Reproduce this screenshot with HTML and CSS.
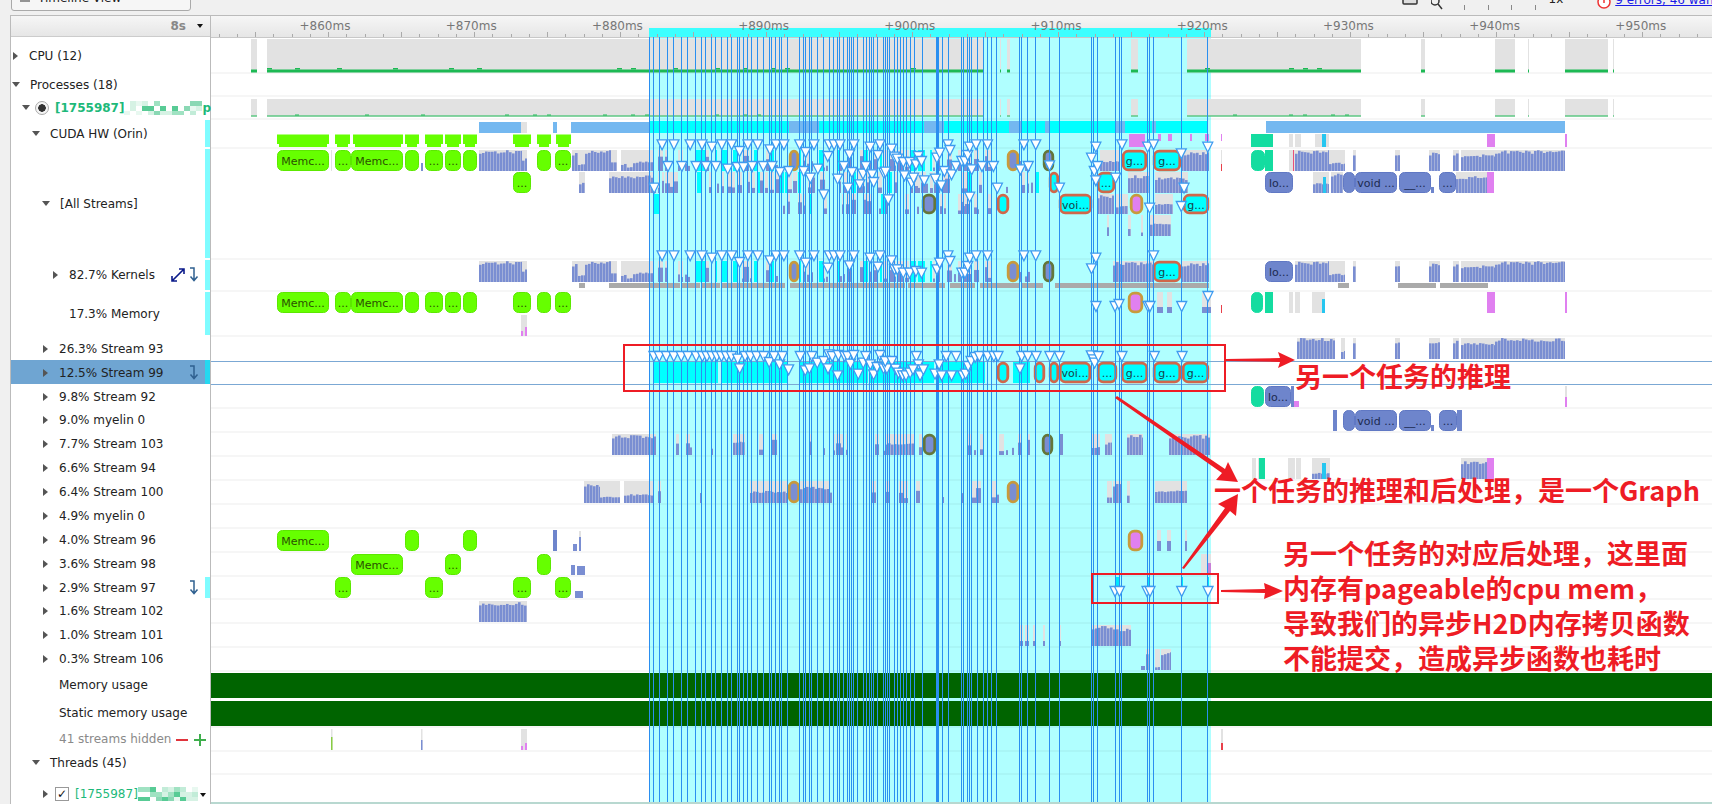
FILE: index.html
```html
<!DOCTYPE html>
<html lang="en">
    <head>
        <meta charset="UTF-8">
        <meta name="viewport" content="width=device-width, initial-scale=1.0">
        <link rel="stylesheet" href="styles.css">
        <title>Timeline View</title>
    </head>
    <body>
        <div class="toolbar">
            <div class="view-btn">
                <svg class="menu-icon" viewBox="0 0 10 10"><path d="M0 2H10M0 5H10M0 8H10"/></svg>
                <span>Timeline View</span>
                <i class="caret"></i>
            </div>
            <div class="tools">
                <svg class="tool-icon" viewBox="0 0 16 12"><rect x="1" y="-6" width="14" height="10" rx="1"/></svg>
                <svg class="tool-icon lens" viewBox="0 0 12 12"><circle cx="4" cy="1" r="4"/><path d="M7 4L11 9"/></svg>
                <div class="zoom-ticks"><i></i><i></i><i></i><i></i></div>
                <span class="speed">1x</span>
                <svg class="err-icon" viewBox="0 0 14 12"><circle cx="7" cy="2" r="6"/><path d="M7 0V3"/></svg>
                <a class="err-link" href="#">9 errors, 46 warnings</a>
            </div>
        </div>

        <div class="panel">
            <div class="side">
                <div class="side-head"><span class="range">8s</span><i class="caret"></i></div>
                <div class="labels">
                    <div class="row lv0"><i class="tri"></i>CPU (12)</div>
                    <div class="row lv0"><i class="tri open"></i>Processes (18)</div>
                    <div class="row lv-proc">
                        <i class="tri open"></i><span class="radio"></span>
                        <b class="proc">[1755987]</b><span class="mosaic" data-n="13"></span><b class="proc">p</b>
                    </div>
                    <div class="row lv1 mark"><i class="tri open"></i>CUDA HW (Orin)</div>
                    <div class="row lv2 mark"><i class="tri open"></i>[All Streams]</div>
                    <div class="row lv3 mark">
                        <i class="tri"></i>82.7% Kernels
                        <svg class="ico-expand" viewBox="0 0 14 14"><path d="M1 13L13 1M8 1H13V6M1 8V13H6"/></svg>
                        <svg class="ico-jump" viewBox="0 0 12 16"><path d="M3 2H7V14M3.5 10.5L7 14.5L10.5 10.5"/></svg>
                    </div>
                    <div class="row plain3 mark">17.3% Memory</div>
                    <div class="row lv2"><i class="tri"></i>26.3% Stream 93</div>
                    <div class="row lv2 mark selected">
                        <i class="tri"></i>12.5% Stream 99
                        <svg class="ico-jump" viewBox="0 0 12 16"><path d="M3 2H7V14M3.5 10.5L7 14.5L10.5 10.5"/></svg>
                    </div>
                    <div class="row lv2"><i class="tri"></i>9.8% Stream 92</div>
                    <div class="row lv2"><i class="tri"></i>9.0% myelin 0</div>
                    <div class="row lv2"><i class="tri"></i>7.7% Stream 103</div>
                    <div class="row lv2"><i class="tri"></i>6.6% Stream 94</div>
                    <div class="row lv2"><i class="tri"></i>6.4% Stream 100</div>
                    <div class="row lv2"><i class="tri"></i>4.9% myelin 0</div>
                    <div class="row lv2"><i class="tri"></i>4.0% Stream 96</div>
                    <div class="row lv2"><i class="tri"></i>3.6% Stream 98</div>
                    <div class="row lv2 mark">
                        <i class="tri"></i>2.9% Stream 97
                        <svg class="ico-jump" viewBox="0 0 12 16"><path d="M3 2H7V14M3.5 10.5L7 14.5L10.5 10.5"/></svg>
                    </div>
                    <div class="row lv2"><i class="tri"></i>1.6% Stream 102</div>
                    <div class="row lv2"><i class="tri"></i>1.0% Stream 101</div>
                    <div class="row lv2"><i class="tri"></i>0.3% Stream 106</div>
                    <div class="row plain2">Memory usage</div>
                    <div class="row plain2">Static memory usage</div>
                    <div class="row plain2 hidden-row">
                        41 streams hidden
                        <span class="minus"></span><span class="plus"></span>
                    </div>
                    <div class="row lv1"><i class="tri open"></i>Threads (45)</div>
                    <div class="row lv2 thread-row">
                        <i class="tri"></i><span class="check">&#10003;</span>
                        <span class="thread-name">[1755987]</span><span class="mosaic" data-n="10"></span>
                        <i class="caret"></i>
                    </div>
                </div>
            </div>
            <svg id="timeline" class="timeline" viewBox="211 15 1501 789"></svg>
        </div>

        <svg class="marks" viewBox="0 0 1712 804">
            <path d="M1226 359L1280 358L1278 352L1295 360L1278 368L1280 362L1226 361Z"/>
            <path d="M1117 396L1225 469L1228 462L1238 482L1216 480L1222 473L1115 398Z"/>
            <path d="M1182 568L1225 508L1218 504L1238 494L1236 516L1230 511L1184 569Z"/>
            <path d="M1221 590L1265 589L1264 583L1283 591L1264 599L1265 593L1221 592Z"/>
        </svg>
        <div class="note-box note-box-a"></div>
        <div class="note-box note-box-b"></div>
        <div class="note note-a">另一个任务的推理</div>
        <div class="note note-b">一个任务的推理和后处理，是一个Graph</div>
        <div class="note note-c">
            <p>另一个任务的对应后处理，这里面</p>
            <p>内存有pageable的cpu mem，</p>
            <p>导致我们的异步H2D内存拷贝函数</p>
            <p>不能提交，造成异步函数也耗时</p>
        </div>

        <script src="timeline.js"></script>
    </body>
</html>
```

FILE: styles.css
```css
* {
    box-sizing: border-box;
}

html, body {
    margin: 0;
    height: 804px;
    overflow: hidden;
}

body {
    position: relative;
    background: #f0f0f0;
    font-family: 'DejaVu Sans', sans-serif;
    font-size: 12px;
    color: #222;
}

.toolbar {
    height: 15px;
    display: flex;
    align-items: flex-end;
    justify-content: space-between;
    overflow: hidden;
    padding-left: 11px;
}

.view-btn {
    width: 180px;
    height: 26px;
    margin-top: -16px;
    margin-bottom: 4px;
    flex: none;
    display: flex;
    align-items: center;
    gap: 8px;
    padding: 0 8px;
    border: 1px solid #aaa;
    border-radius: 3px;
    background: #f6f6f6;
}

.view-btn .caret {
    margin-left: auto;
}

.menu-icon {
    width: 10px;
    height: 10px;
    stroke: #333;
    fill: none;
}

.tools {
    display: flex;
    align-items: flex-start;
    width: 310px;
    height: 15px;
    flex: none;
}

.tools > * {
    flex: none;
}

.tool-icon {
    width: 16px;
    height: 12px;
    stroke: #333;
    stroke-width: 1.5;
    fill: #ddd;
    margin-right: 13px;
}

.tool-icon.lens {
    width: 12px;
    fill: none;
}

.zoom-ticks {
    display: flex;
    gap: 22.5px;
    padding-top: 5px;
    margin-left: 8px;
}

.zoom-ticks i {
    width: 1px;
    height: 5px;
    background: #888;
}

.speed {
    margin-left: 13px;
    line-height: 1;
    margin-top: -7px;
    font-size: 12px;
}

.err-icon {
    width: 14px;
    height: 12px;
    margin-left: 34px;
    stroke: #e33;
    stroke-width: 1.5;
    fill: #fff;
}

.err-link {
    margin-left: 4px;
    margin-top: -7px;
    color: #1a1ae8;
    white-space: nowrap;
    line-height: 1.2;
}

.panel {
    display: flex;
    height: 789px;
    margin-left: 10px;
    border-left: 1px solid #bbb;
    border-top: 1px solid #bbb;
}

.side {
    width: 200px;
    flex: none;
    background: #fff;
    border-right: 1px solid #bbb;
    height: 788px;
}

.side-head {
    height: 21px;
    display: flex;
    align-items: center;
    justify-content: flex-end;
    padding-right: 7px;
    gap: 11px;
    background: linear-gradient(#f6f6f6, #e6e6e6);
    border-bottom: 1px solid #ccc;
}

.range {
    color: #888;
    font-weight: bold;
}

.caret {
    display: inline-block;
    width: 0;
    height: 0;
    border-left: 3.5px solid transparent;
    border-right: 3.5px solid transparent;
    border-top: 4px solid #111;
}

.labels {
    display: grid;
    grid-template-rows: 35px 23px 23px 29px 111px 32px 45px 25px 24px 23px 24px 24px 24px 24px 24px 24px 24px 23px 24px 24px 24px 28px 28px 24px 23px 28px;
}

.row {
    position: relative;
    display: flex;
    align-items: center;
    white-space: nowrap;
    min-width: 0;
    padding-top: 2px;
}

.lv0 { padding-left: 2px; }
.lv-proc { padding-left: 12px; }
.lv1 { padding-left: 22px; }
.lv2 { padding-left: 32px; }
.lv3 { padding-left: 42px; }
.plain2 { padding-left: 48px; }
.plain3 { padding-left: 58px; }

.tri {
    flex: none;
    width: 0;
    height: 0;
    margin-right: 11px;
    border-top: 4px solid transparent;
    border-bottom: 4px solid transparent;
    border-left: 5px solid #555;
}

.tri.open {
    margin-left: -1px;
    margin-right: 10px;
    border-left: 4px solid transparent;
    border-right: 4px solid transparent;
    border-bottom: 0;
    border-top: 5px solid #555;
}

.radio {
    flex: none;
    width: 14px;
    height: 14px;
    margin: 0 6px 0 -5px;
    border: 1px solid #aaa;
    border-radius: 50%;
    background: radial-gradient(circle, #333 0 3.5px, #f4f4f4 4px);
}

.proc {
    color: #1db97a;
}

.mosaic {
    flex: none;
    display: flex;
    height: 14px;
    overflow: hidden;
    flex-wrap: wrap;
}

.mark::after {
    content: "";
    position: absolute;
    top: 2px;
    bottom: 0;
    right: 0;
    width: 5px;
    background: #7ffcff;
}

.selected {
    background: #6fa5d2;
}

.selected::after {
    background: #25d8f0;
    top: 0;
}

.ico-expand {
    position: absolute;
    left: 160px;
    top: 10px;
    width: 14px;
    height: 14px;
    fill: none;
    stroke: #0a1a8a;
    stroke-width: 1.6;
}

.ico-jump {
    position: absolute;
    left: 176px;
    top: calc(50% - 8px);
    width: 12px;
    height: 16px;
    fill: none;
    stroke: #2f6090;
    stroke-width: 1.5;
}

.hidden-row {
    color: #8a8a8a;
}

.minus, .plus {
    position: absolute;
    top: 13px;
    width: 12px;
    height: 2px;
}

.minus {
    left: 165px;
    background: #e0343c;
}

.plus {
    left: 183px;
    background: #3eae4c;
}

.plus::after {
    content: "";
    position: absolute;
    left: 5px;
    top: -5px;
    width: 2px;
    height: 12px;
    background: #3eae4c;
}

.check {
    flex: none;
    width: 14px;
    height: 14px;
    margin-right: 6px;
    border: 1px solid #999;
    font-size: 12px;
    line-height: 12px;
    text-align: center;
    font-weight: bold;
    color: #111;
}

.thread-name {
    color: #1db97a;
}

.thread-row {
    align-items: flex-end;
}

.thread-row .tri {
    margin-right: 7px;
    margin-bottom: 3px;
}

.thread-row .caret {
    position: absolute;
    left: 189px;
    top: 20px;
}

.timeline {
    width: 1501px;
    height: 789px;
    flex: none;
    display: block;
    background: #fff;
    font-family: 'DejaVu Sans', sans-serif;
}

.timeline .ruler-text {
    font-size: 12px;
    fill: #777;
    text-anchor: middle;
}

.timeline .ev-text {
    font-size: 11px;
    text-anchor: middle;
}

.marks {
    position: absolute;
    left: 0;
    top: 0;
    width: 1712px;
    height: 804px;
    fill: #ee1c25;
    pointer-events: none;
}

.note-box {
    position: absolute;
    border: 2.5px solid #ee1c25;
}

.note-box-a {
    left: 623px;
    top: 344px;
    width: 603px;
    height: 48px;
}

.note-box-b {
    left: 1091px;
    top: 573px;
    width: 128px;
    height: 31px;
}

.note {
    position: absolute;
    font-family: 'Noto Sans CJK SC', sans-serif;
    font-size: 27px;
    font-weight: bold;
    color: #ee1c25;
    white-space: nowrap;
    line-height: 35px;
}

.note p {
    margin: 0;
}

.note-a {
    left: 1295px;
    top: 358px;
}

.note-b {
    left: 1214px;
    top: 472px;
}

.note-c {
    left: 1283px;
    top: 535px;
}
```

FILE: timeline.js
```js
// draws the timeline canvas, coordinates are page pixels (the svg viewBox starts at 211,15)
var svg = document.getElementById('timeline');
var out = [];

var BLUE = '#7a8ed2', GRAY = '#e2e2e2', CYAN = '#00ffff', PINK = '#e080f0', TEAL = '#14dca0', LIME = '#66ff00';

function rng(seed) {
    return function() {
        seed = (seed * 16807) % 2147483647;
        return seed / 2147483647;
    };
}

function rect(x0, x1, y0, y1, fill) {
    out.push('<rect x="' + x0 + '" y="' + y0 + '" width="' + (x1 - x0) + '" height="' + (y1 - y0) + '" fill="' + fill + '"/>');
}

function bars(lane, x0, x1, lvl, seed) {
    var r = rng(seed * 97 + 11);
    rect(x0, x1, lane[0], lane[1], GRAY);
    for (var x = x0; x < x1; x += 3) {
        var h = (lane[1] - lane[0]) * lvl * (0.82 + 0.18 * r());
        rect(x, Math.min(x + 2.6, x1), lane[1] - h, lane[1], BLUE);
    }
}

// messy stretch of short tasks inside the selection
function mix(lane, x0, x1, seed, cy, dense) {
    var r = rng(seed * 131 + 7);
    var h = lane[1] - lane[0];
    var x = x0;
    while (x < x1) {
        var w = 2 + Math.floor(r() * 4);
        var t = r();
        if (t < cy) {
            rect(x, x + w, lane[0], lane[1], CYAN);
        } else if (t < cy + dense) {
            rect(x, x + w, lane[0], lane[1], GRAY);
            var b = h * (0.15 + r() * 0.6);
            rect(x, x + w, lane[1] - b, lane[1], BLUE);
        } else if (t < cy + dense + 0.12) {
            var c = h * (0.2 + r() * 0.3);
            rect(x, x + 2, lane[1] - c, lane[1], BLUE);
        }
        x += w + Math.floor(r() * 3);
    }
}

function box(lane, x0, x1, kind, text) {
    var fill = LIME, stroke = '#5ce800', sw = 1, color = '#2a5200';
    if (kind == 'blue') { fill = '#6e85cc'; stroke = '#6078c4'; color = '#1c2a50'; }
    if (kind == 'red') { fill = CYAN; stroke = '#d0674a'; sw = 2.8; color = '#17424a'; }
    if (kind == 'orange') { fill = BLUE; stroke = '#c89a3c'; sw = 2.8; }
    if (kind == 'olive') { fill = BLUE; stroke = '#64763a'; sw = 2.8; }
    if (kind == 'pink') { fill = PINK; stroke = '#c89a3c'; sw = 2.8; }
    if (kind == 'teal') { fill = TEAL; stroke = TEAL; }
    var i = sw > 1 ? 1.2 : 0.5;
    out.push('<rect x="' + (x0 + i) + '" y="' + (lane[0] + i) + '" width="' + (x1 - x0 - 2 * i) + '" height="' + (lane[1] - lane[0] - 2 * i) +
        '" rx="5" fill="' + fill + '" stroke="' + stroke + '" stroke-width="' + sw + '"/>');
    if (text) {
        out.push('<text class="ev-text" x="' + (x0 + x1) / 2 + '" y="' + (lane[0] + 14.5) + '" fill="' + color + '">' + text + '</text>');
    }
}

function tris(list, fx, fy) {
    for (var i = 0; i < list.length; i++) {
        var x = fx(list[i][0]), y = fy(list[i][1]);
        out.push('<polygon points="' + (x - 5) + ',' + (y - 4.5) + ' ' + (x + 5) + ',' + (y - 4.5) + ' ' + x + ',' + (y + 5.5) +
            '" fill="#fff" stroke="#3d9bf0" stroke-width="1.3"/>');
    }
}

var lanes = {
    a1: [149, 170], a2: [171, 192], a3: [193, 213], a4: [214, 235], kern: [260, 281],
    mem1: [291, 312], mem2: [314, 335], s93: [337, 358], s99: [361, 382], s92: [385, 406], my1: [409, 430],
    s103: [433, 454], s94: [457, 478], s100: [480, 502], s96: [529, 550], s98: [553, 574], s97: [576, 597],
    s102: [600, 621], s101: [624, 645], s106: [648, 669], hid: [728, 749]
};

// header and selection
out.push('<defs><linearGradient id="head" x1="0" y1="0" x2="0" y2="1"><stop offset="0" stop-color="#f6f6f6"/><stop offset="1" stop-color="#e6e6e6"/></linearGradient></defs>');
rect(211, 1712, 15, 36, 'url(#head)');
var rowLines = [72, 95, 118, 147, 258, 290, 335, 407, 431, 455, 479, 503, 527, 551, 575, 598, 622, 646, 670, 726, 750, 773];
rect(649, 1211, 36, 801, '#b0ffff');
rect(649, 1211, 27, 36, '#3cffff');
for (var i = 0; i < rowLines.length; i++) {
    rect(211, 1712, rowLines[i] - 0.5, rowLines[i] + 0.5, 'rgba(0,0,0,0.07)');
}
rect(211, 1712, 36, 37, '#c8c8c8');

// ruler
for (var n = 0; n * 18.25 + 211 < 1712; n++) {
    var tx = 1496 - 18.25 * 70 + n * 18.25;
    if (tx < 211) continue;
    var tall = (n % 4 == 2);
    rect(Math.round(tx), Math.round(tx) + 1, tall ? 31 : 33, 36, '#aaa');
}
var labels = ['+860ms', '+870ms', '+880ms', '+890ms', '+900ms', '+910ms', '+920ms', '+930ms', '+940ms', '+950ms'];
for (var k = 0; k < labels.length; k++) {
    out.push('<text class="ruler-text" x="' + (325 + k * 146.2) + '" y="29">' + labels[k] + '</text>');
}

// cpu and process usage strips
var cpuSegs = [[251, 257], [267, 983], [1000, 1001], [1007, 1010], [1131, 1138], [1187, 1361], [1421, 1425], [1495, 1515], [1528, 1529], [1565, 1608], [1613, 1614]];
cpuSegs.forEach(function(s) {
    rect(s[0], s[1], 38, 71.5, GRAY);
    rect(s[0], s[1], 68.5, 71.5, '#1db954');
    rect(s[0], s[1], 98, 115.5, GRAY);
    rect(s[0], s[1], 114.5, 115.5, '#1db954');
});
var bump = rng(55);
for (var cx = 267; cx < 1361; cx += 14) {
    if (cx > 983 && cx < 1187) continue;
    if (bump() < 0.35) rect(cx, cx + 5, 67, 68.5, '#1db954');
    if (bump() < 0.2) rect(cx, cx + 4, 113.5, 114.5, '#1db954');
}

// CUDA HW strips
rect(479, 527, 121, 132, '#74b8f0');
rect(521, 527, 121, 132, GRAY);
rect(553, 557, 121, 132, '#74b8f0');
rect(571, 649, 121, 132, '#74b8f0');
rect(649, 1208, 120, 132, CYAN);
[[789, 819], [924, 944], [1009, 1022], [1045, 1050], [1115, 1125], [1152, 1156]].forEach(function(s) {
    rect(s[0], s[1], 120, 132, '#74b8f0');
});
rect(1266, 1565, 120, 132, '#74b8f0');
[[277, 329], [335, 350], [353, 403], [405, 419], [425, 443], [445, 461], [463, 477], [513, 531], [537, 551], [556, 571]].forEach(function(s) {
    rect(s[0], s[1], 133.5, 143, LIME);
    rect(s[0] + 2, s[1] - 2, 143, 146, LIME);
});
rect(1129, 1145, 133, 146, PINK);
[[1158, 1161], [1168, 1172], [1190, 1192], [1205, 1209], [1221, 1222]].forEach(function(s) {
    rect(s[0], s[1], 133, 140, PINK);
});
rect(1251, 1273, 133, 146, TEAL);
rect(1289, 1293, 133, 146, GRAY);
rect(1295, 1301, 133, 146, GRAY);
rect(1315, 1329, 133, 146, GRAY);
rect(1322, 1326, 133, 146, '#26c6f0');
rect(1487, 1495, 133, 146, PINK);
rect(1565, 1567, 133, 146, PINK);

// stretches that show both in the top lane and the kernels lane
function kernelBars(lane) {
    var rows = [[479, 522, 1, 1], [522, 527, 0.6, 2], [572, 578, 0.9, 3], [578, 585, 0.35, 4], [585, 611, 1, 5], [611, 617, 0.5, 6],
        [621, 627, 0.35, 7], [627, 633, 0.2, 8], [633, 654, 0.45, 9], [1181, 1209, 0.9, 10],
        [1295, 1329, 1, 11], [1329, 1345, 0.4, 12], [1353, 1356, 0.9, 13], [1395, 1400, 0.9, 14], [1429, 1440, 0.9, 15],
        [1453, 1459, 0.9, 16], [1461, 1495, 0.8, 17], [1495, 1565, 1, 18]];
    rows.forEach(function(b) { bars(lane, b[0], b[1], b[2], b[3]); });
    mix(lane, 654, 789, 21, 0.24, 0.36);
    mix(lane, 799, 985, 22, 0.14, 0.48);
    mix(lane, 985, 1007, 23, 0.14, 0.24);
    mix(lane, 1019, 1042, 24, 0.24, 0.12);
}
kernelBars(lanes.a1);
kernelBars(lanes.kern);
bars(lanes.a1, 1100, 1120, 0.5, 30);
bars(lanes.kern, 1113, 1153, 0.95, 31);
rect(1221, 1222, 163, 170, '#e8404a');
rect(1221, 1222, 149, 163, GRAY);
box(lanes.a1, 1251, 1265, 'teal');
rect(1265, 1273, 149, 170, TEAL);
rect(1289, 1295, 149, 170, GRAY);
rect(1293, 1294, 149, 170, '#e8507a');

[[277, 329, 'Memc...'], [335, 351, '...'], [351, 403, 'Memc...'], [405, 419], [425, 443, '...'], [445, 461, '...'], [463, 477], [537, 551], [555, 571, '...']].forEach(function(b) {
    box(lanes.a1, b[0], b[1], 'lime', b[2]);
    box(lanes.mem1, b[0], b[1], 'lime', b[2]);
});
box(lanes.mem1, 513, 531, 'lime', '...');
box(lanes.a2, 513, 531, 'lime', '...');
rect(331, 332, 149, 170, GRAY);
rect(421, 423, 162, 170, BLUE);

[lanes.a1, lanes.kern].forEach(function(l) {
    box(l, 789, 799, 'orange');
    box(l, 1007, 1019, 'orange');
    box(l, 1043, 1054, 'olive');
});
box(lanes.a1, 1122, 1147, 'red', 'g...');
box(lanes.a1, 1153, 1181, 'red', 'g...');
box(lanes.kern, 1153, 1181, 'red', 'g...');
box(lanes.kern, 1265, 1293, 'blue', 'lo...');

// second lane
bars(lanes.a2, 579, 585, 0.5, 40);
bars(lanes.a2, 609, 653, 0.85, 41);
mix(lanes.a2, 654, 1047, 42, 0.14, 0.4);
box(lanes.a2, 1049, 1059, 'red');
box(lanes.a2, 1097, 1115, 'red', '...');
bars(lanes.a2, 1128, 1150, 0.85, 43);
bars(lanes.a2, 1155, 1188, 0.75, 44);
box(lanes.a2, 1265, 1293, 'blue', 'lo...');
bars(lanes.a2, 1313, 1329, 0.5, 45);
rect(1323, 1326, 176, 192, '#26c6f0');
bars(lanes.a2, 1331, 1343, 0.95, 46);
box(lanes.a2, 1343, 1355, 'blue');
box(lanes.a2, 1355, 1397, 'blue', 'void ...');
box(lanes.a2, 1399, 1431, 'blue', '__...');
rect(1431, 1434, 186, 192, '#6e85cc');
box(lanes.a2, 1439, 1456, 'blue', '...');
bars(lanes.a2, 1456, 1487, 0.8, 47);
rect(1487, 1494, 171, 192, PINK);

// third and fourth lanes
rect(653, 659, 193, 213, CYAN);
mix(lanes.a3, 780, 921, 50, 0.04, 0.26);
box(lanes.a3, 922, 936, 'olive');
mix(lanes.a3, 937, 995, 51, 0.04, 0.28);
box(lanes.a3, 997, 1009, 'red');
box(lanes.a3, 1059, 1092, 'red', 'voi...');
bars(lanes.a3, 1097, 1114, 0.95, 52);
bars(lanes.a3, 1116, 1128, 0.4, 53);
box(lanes.a3, 1130, 1143, 'pink');
bars(lanes.a3, 1155, 1173, 0.55, 54);
box(lanes.a3, 1183, 1209, 'red', 'g...');
bars(lanes.a4, 1107, 1109, 0.5, 55);
bars(lanes.a4, 1128, 1131, 0.4, 56);
bars(lanes.a4, 1141, 1143, 0.2, 57);
bars(lanes.a4, 1150, 1171, 0.65, 58);

// gray bar under the kernels
[[579, 585], [609, 680], [682, 700], [702, 720], [722, 785], [790, 905], [908, 945], [950, 975], [980, 1020], [1022, 1043], [1055, 1209], [1338, 1349], [1398, 1436], [1440, 1488]].forEach(function(s) {
    rect(s[0], s[1], 282, 287, '#aaaaaa');
});

// memory row, second lane and right side
rect(521, 527, 314, 335, GRAY);
rect(521, 523, 330, 335, PINK);
rect(525, 527, 326, 335, PINK);
box(lanes.mem1, 1128, 1143, 'pink');
[[1157, 1163, 0.3], [1167, 1172, 0.3], [1202, 1211, 0.3]].forEach(function(s) {
    rect(s[0], s[1], 291, 312, GRAY);
    rect(s[0], s[1], 306, 312, BLUE);
});
rect(1221, 1222, 304, 312, '#e8404a');
box(lanes.mem1, 1251, 1263, 'teal');
rect(1265, 1273, 291, 312, TEAL);
rect(1289, 1293, 291, 312, GRAY);
rect(1295, 1300, 291, 312, GRAY);
rect(1312, 1325, 291, 312, GRAY);
rect(1322, 1325, 298, 312, '#26c6f0');
rect(1487, 1495, 291, 312, PINK);
rect(1565, 1567, 291, 312, PINK);

// stream 93
bars(lanes.s93, 1297, 1335, 1, 60);
bars(lanes.s93, 1341, 1345, 0.4, 61);
bars(lanes.s93, 1353, 1356, 0.9, 62);
bars(lanes.s93, 1395, 1400, 0.9, 63);
bars(lanes.s93, 1429, 1440, 0.9, 64);
bars(lanes.s93, 1453, 1459, 0.9, 65);
bars(lanes.s93, 1461, 1495, 0.8, 66);
bars(lanes.s93, 1495, 1565, 1, 67);

// stream 99, the selected one
rect(211, 1712, 360, 361, '#7ba8d4');
rect(211, 1712, 383, 384, '#7ba8d4');
[[654, 718], [721, 788], [800, 868], [870, 934], [936, 985]].forEach(function(s) {
    rect(s[0], s[1], 361, 382, CYAN);
});
box(lanes.s99, 997, 1009, 'red');
box(lanes.s99, 1034, 1045, 'red');
box(lanes.s99, 1049, 1059, 'red');
box(lanes.s99, 1059, 1091, 'red', 'voi...');
box(lanes.s99, 1097, 1117, 'red', '...');
box(lanes.s99, 1121, 1148, 'red', 'g...');
box(lanes.s99, 1153, 1181, 'red', 'g...');
box(lanes.s99, 1182, 1209, 'red', 'g...');
rect(1013, 1030, 361, 382, CYAN);

// stream 92 and first myelin
box(lanes.s92, 1251, 1264, 'teal');
box(lanes.s92, 1265, 1291, 'blue', 'lo...');
rect(1291, 1294, 385, 406, '#6e85cc');
rect(1294, 1299, 400, 406, PINK);
rect(1565, 1567, 385, 396, GRAY);
rect(1565, 1567, 396, 406, PINK);
rect(1333, 1337, 409, 430, '#6e85cc');
box(lanes.my1, 1343, 1355, 'blue');
box(lanes.my1, 1355, 1397, 'blue', 'void ...');
box(lanes.my1, 1399, 1431, 'blue', '__...');
rect(1431, 1434, 424, 430, '#6e85cc');
box(lanes.my1, 1439, 1457, 'blue', '...');
rect(1457, 1462, 409, 430, '#6e85cc');

// stream 103
bars(lanes.s103, 612, 656, 0.95, 70);
mix(lanes.s103, 656, 775, 71, 0, 0.2);
bars(lanes.s103, 733, 745, 0.7, 72);
mix(lanes.s103, 800, 921, 73, 0, 0.3);
bars(lanes.s103, 885, 915, 0.6, 74);
box(lanes.s103, 923, 936, 'olive');
mix(lanes.s103, 937, 1040, 75, 0, 0.22);
box(lanes.s103, 1042, 1053, 'olive');
rect(1059, 1063, 433, 454, BLUE);
bars(lanes.s103, 1092, 1100, 0.4, 76);
bars(lanes.s103, 1105, 1112, 0.6, 77);
bars(lanes.s103, 1127, 1143, 1, 78);
bars(lanes.s103, 1169, 1210, 0.95, 79);

// stream 94
[[1252, 1256], [1258, 1265], [1288, 1295], [1296, 1301]].forEach(function(s) {
    rect(s[0], s[1], 457, 478, GRAY);
});
rect(1259, 1265, 457, 478, TEAL);
bars(lanes.s94, 1312, 1330, 0.3, 80);
rect(1322, 1326, 462, 478, '#26c6f0');
bars(lanes.s94, 1461, 1487, 0.85, 81);
rect(1487, 1494, 457, 478, PINK);

// stream 100
bars(lanes.s100, 584, 600, 0.9, 82);
bars(lanes.s100, 600, 620, 0.3, 83);
bars(lanes.s100, 624, 654, 0.4, 84);
mix(lanes.s100, 654, 750, 85, 0, 0.2);
bars(lanes.s100, 750, 788, 0.55, 86);
box(lanes.s100, 788, 800, 'orange');
bars(lanes.s100, 800, 830, 0.75, 87);
mix(lanes.s100, 830, 1006, 88, 0, 0.28);
box(lanes.s100, 1007, 1019, 'orange');
bars(lanes.s100, 1107, 1112, 0.3, 89);
bars(lanes.s100, 1113, 1121, 0.9, 90);
bars(lanes.s100, 1127, 1130, 0.4, 91);
bars(lanes.s100, 1155, 1187, 0.6, 92);

// green streams
[[277, 329, 'Memc...'], [405, 419], [463, 477]].forEach(function(b) { box(lanes.s96, b[0], b[1], 'lime', b[2]); });
[[351, 403, 'Memc...'], [445, 461, '...'], [537, 551]].forEach(function(b) { box(lanes.s98, b[0], b[1], 'lime', b[2]); });
[[335, 351, '...'], [425, 443, '...'], [513, 531, '...'], [555, 571, '...']].forEach(function(b) { box(lanes.s97, b[0], b[1], 'lime', b[2]); });
rect(553, 557, 529, 550, '#6e85cc');
rect(573, 577, 543, 550, BLUE);
rect(579, 581, 530, 550, GRAY);
rect(579, 581, 536, 550, BLUE);
box(lanes.s96, 1128, 1143, 'pink');
[[1157, 1161], [1167, 1171], [1185, 1187]].forEach(function(s) {
    rect(s[0], s[1], 529, 550, GRAY);
    rect(s[0], s[1], 540, 550, BLUE);
});
rect(571, 575, 564, 574, BLUE);
rect(577, 585, 565, 574, BLUE);
rect(1201, 1211, 553, 574, GRAY);
rect(1208, 1211, 562, 574, '#c880d8');
rect(575, 583, 590, 597, BLUE);
[[1115, 1119], [1147, 1149], [1181, 1183], [1207, 1209]].forEach(function(s) {
    rect(s[0], s[1], 576, 590, '#00e8ff');
});

// streams 102, 101, 106
bars(lanes.s102, 479, 527, 0.95, 95);
[[1019, 1023], [1025, 1029], [1033, 1036], [1043, 1045], [1059, 1061]].forEach(function(s) {
    rect(s[0], s[1], 624, 645, GRAY);
    rect(s[0], s[1], 640, 645, BLUE);
});
bars(lanes.s101, 1092, 1119, 0.95, 96);
bars(lanes.s101, 1120, 1131, 0.85, 97);
rect(1141, 1145, 665, 669, BLUE);
bars(lanes.s106, 1146, 1150, 0.9, 98);
bars(lanes.s106, 1155, 1160, 0.15, 99);
bars(lanes.s106, 1161, 1171, 0.85, 100);

// memory usage
rect(211, 1712, 672, 697, '#006400');
rect(211, 1712, 700, 725, '#006400');

// hidden streams
rect(331, 332.5, 728, 749, GRAY);
rect(331, 332.5, 736, 749, '#88cc44');
rect(421, 422.5, 728, 749, GRAY);
rect(421, 422.5, 739, 749, BLUE);
rect(521, 527, 728, 749, GRAY);
rect(521, 523, 745, 749, PINK);
rect(525, 527, 742, 749, PINK);
rect(1221, 1223, 728, 749, GRAY);
rect(1221, 1223, 742, 749, '#e8404a');

// bottom edge
rect(211, 1712, 801, 804, '#b8d8d0');

// selection lines
var lines = [649.3, 653.3, 659.3, 667.3, 673.3, 681.3, 687.3, 695.3, 701.3, 705.3, 711.3, 715.3, 721.3, 727.3, 731.3, 737.3, 739.3, 743.3, 747.3, 751.3,
    757.3, 763.3, 769.3, 771.3, 775.3, 779.3, 781.3, 787.3, 799.3, 803.3, 805.3, 809.3, 811.3, 817.3, 823.3, 829.3, 833.3, 837.3, 839.3, 843.3,
    847.3, 849.3, 851.3, 853.3, 857.3, 863.3, 866, 869.3, 871.3, 873.3, 877.3, 883.3, 885.3, 887.3, 889.3, 894.6, 897.4, 900.5, 903.7, 906.4,
    910.4, 914.4, 922.3, 936, 937.3, 938.9, 942.8, 948, 961, 963.8, 967, 969.7, 971.7, 977.6, 983.5, 987.5, 991.5, 996.6,
    1019.3, 1021.3, 1027.3, 1035.3, 1049.3, 1059.3, 1091.3, 1093.3, 1097.3, 1115.3, 1119.3, 1121.3, 1147.3, 1149.3, 1153.3, 1181.3, 1207.3];
lines.forEach(function(x) {
    rect(Math.floor(x), Math.floor(x) + 1, 36, 801, '#2a8ff0');
});

// event markers, first group read off at 2.529x / 3x
var zx = function(v) { return 600 + v / 2.529; };
var zy = function(v) { return v / 3; };
tris([[137, 560], [157, 430], [187, 430], [172, 495], [207, 495], [228, 430], [243, 495], [258, 430], [268, 495], [283, 437], [293, 495], [308, 430], [323, 503], [333, 430],
    [347, 498], [353, 450], [363, 498], [374, 430], [385, 495], [399, 430], [413, 495], [430, 445], [435, 495], [445, 430], [455, 513], [465, 430], [478, 510], [505, 430],
    [515, 510], [520, 453], [532, 530], [541, 430], [551, 503], [566, 580], [576, 465], [580, 430], [592, 430], [601, 533], [607, 430], [617, 495], [627, 560], [631, 460],
    [637, 513], [642, 430], [657, 550], [665, 518], [672, 495], [683, 437], [688, 520], [692, 543], [703, 462], [708, 430], [718, 515], [722, 512], [729, 595], [737, 443],
    [745, 467], [752, 473], [767, 483], [770, 523], [783, 483], [788, 545], [793, 530], [799, 490], [805, 465], [813, 480], [820, 538], [848, 533], [852, 470], [859, 455],
    [863, 553], [871, 510], [880, 430], [885, 447], [889, 520], [900, 495], [915, 480], [923, 480], [930, 462], [935, 437], [935, 587], [940, 505], [951, 430], [966, 495],
    [980, 430], [995, 495], [1005, 560], [1063, 505], [1072, 430], [1083, 495], [1102, 430], [1137, 493], [1162, 560], [1243, 470], [1250, 510], [1254, 538], [1254, 437],
    [1258, 495], [1304, 530], [1320, 430], [1385, 437], [1390, 620], [1400, 430], [1470, 457], [1470, 615], [1477, 560], [1537, 437],
    [157, 763], [187, 763], [228, 763], [258, 763], [283, 770], [308, 763], [333, 763], [353, 783], [374, 763], [399, 763], [430, 778], [445, 763], [465, 763], [505, 763],
    [520, 785], [541, 763], [576, 800], [580, 763], [592, 763], [607, 763], [631, 793], [642, 763], [683, 770], [703, 797], [708, 763], [737, 778], [745, 805], [752, 805],
    [767, 815], [783, 815], [799, 810], [813, 815], [852, 805], [859, 785], [880, 763], [885, 780], [915, 815], [923, 815], [930, 795], [935, 770], [951, 763], [980, 763],
    [1072, 763], [1102, 763], [1243, 802], [1254, 770], [1400, 763]], zx, zy);

// stream 99 markers, read off at 2.412x
tris([[130, 225], [143, 225], [160, 225], [178, 225], [196, 225], [212, 225], [232, 225], [247, 225], [258, 225], [270, 225], [282, 225], [293, 225], [305, 225], [317, 225],
    [332, 233], [337, 262], [350, 225], [363, 225], [378, 225], [395, 225], [408, 243], [420, 225], [433, 250], [440, 225], [455, 265], [483, 225], [495, 268], [505, 262],
    [511, 225], [524, 245], [540, 240], [550, 262], [552, 220], [560, 225], [573, 283], [575, 222], [590, 225], [597, 225], [604, 248], [612, 222], [623, 278], [635, 245],
    [641, 225], [652, 250], [660, 280], [668, 258], [675, 222], [684, 262], [692, 262], [688, 240], [704, 240], [713, 263], [720, 275], [730, 283], [738, 283], [748, 275],
    [763, 225], [768, 250], [755, 265], [772, 283], [780, 265], [808, 278], [818, 250], [824, 283], [835, 225], [848, 283], [859, 225], [875, 283], [882, 278], [888, 255],
    [895, 240], [905, 228], [915, 225], [935, 225], [950, 225], [960, 225], [1013, 262], [1017, 225], [1032, 225], [1052, 225], [1085, 225], [1108, 225], [1185, 223],
    [1190, 235], [1193, 245], [1202, 225], [1259, 225], [1337, 225], [1404, 225]],
    function(v) { return 600 + v / 2.412; }, function(v) { return 280 + v / 3; });

// memory row and stream 97 markers, already page pixels
var same = function(v) { return v; };
tris([[1096, 305], [1115, 305], [1119, 303], [1148, 305], [1150, 305], [1181.7, 305], [1208, 295],
    [1115, 590], [1119.5, 590], [1147, 590], [1150, 590], [1181.7, 590], [1208, 590]], same, same);

svg.innerHTML = out.join('');

// blur the pixelated process names
var mosaics = document.querySelectorAll('.mosaic');
var mosaicColors = ['#ffffff', '#d6f2e4', '#a0e2c2', '#58cb95', '#e8f8f0', '#8ad8b4', '#c2ecd8', '#ffffff'];
var pick = rng(321);
mosaics.forEach(function(m) {
    var n = Number(m.getAttribute('data-n'));
    m.style.width = n * 6 + 'px';
    var cells = '';
    for (var i = 0; i < n * 3; i++) {
        cells += '<i style="width:6px;height:5px;background:' + mosaicColors[Math.floor(pick() * mosaicColors.length)] + '"></i>';
    }
    m.innerHTML = cells;
});
```
